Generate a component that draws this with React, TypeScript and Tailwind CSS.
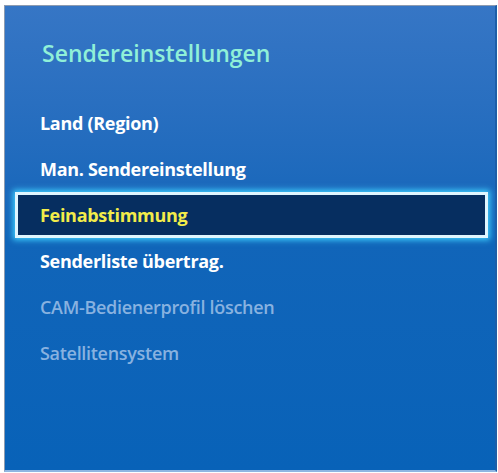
import * as React from 'react';

const items = [
  { label: 'Land (Region)', state: 'normal' },
  { label: 'Man. Sendereinstellung', state: 'normal' },
  { label: 'Feinabstimmung', state: 'active' },
  { label: 'Senderliste übertrag.', state: 'normal' },
  { label: 'CAM-Bedienerprofil löschen', state: 'disabled' },
  { label: 'Satellitensystem', state: 'disabled' },
];

const App = () => {
  return (
    <div className="w-[498px] h-[473px] bg-white overflow-hidden" style={{ fontFamily: '"Open Sans", "Noto Sans", sans-serif' }}>
      <div className="mt-[5px] ml-[4px] w-[493px] h-[467px] border-l border-t border-[#8d9bb0] border-b-2 border-b-[#8fb6e2] border-r-2 border-r-[#1d5ea8] bg-gradient-to-b from-[#3676c5] via-[#1165b9] to-[#0862b8] flex flex-col">
        <div className="pt-[32px] pl-[37px] text-[23px] leading-[30px] font-semibold text-[#90f0d8]">
          Sendereinstellungen
        </div>
        <div className="mt-[32px] pl-[10px] pr-[7px] flex flex-col">
          {items.map((it) => (
            <div
              key={it.label}
              className={
                it.state === 'active'
                  ? 'h-[46px] flex items-center pl-[22px] text-[18px] font-bold bg-[#062e60] border-[3px] border-[#dff6ff] shadow-[0_0_6px_2px_#3fd0ff] text-[#f2ec4a]'
                  : it.state === 'disabled'
                  ? 'h-[46px] flex items-center pl-[25px] text-[18px] font-semibold text-[#88b2e0]'
                  : 'h-[46px] flex items-center pl-[25px] text-[18px] font-bold text-white'
              }
            >
              <span className="leading-[24px] tracking-[-0.3px]">{it.label}</span>
            </div>
          ))}
        </div>
      </div>
    </div>
  );
};

export default App;
